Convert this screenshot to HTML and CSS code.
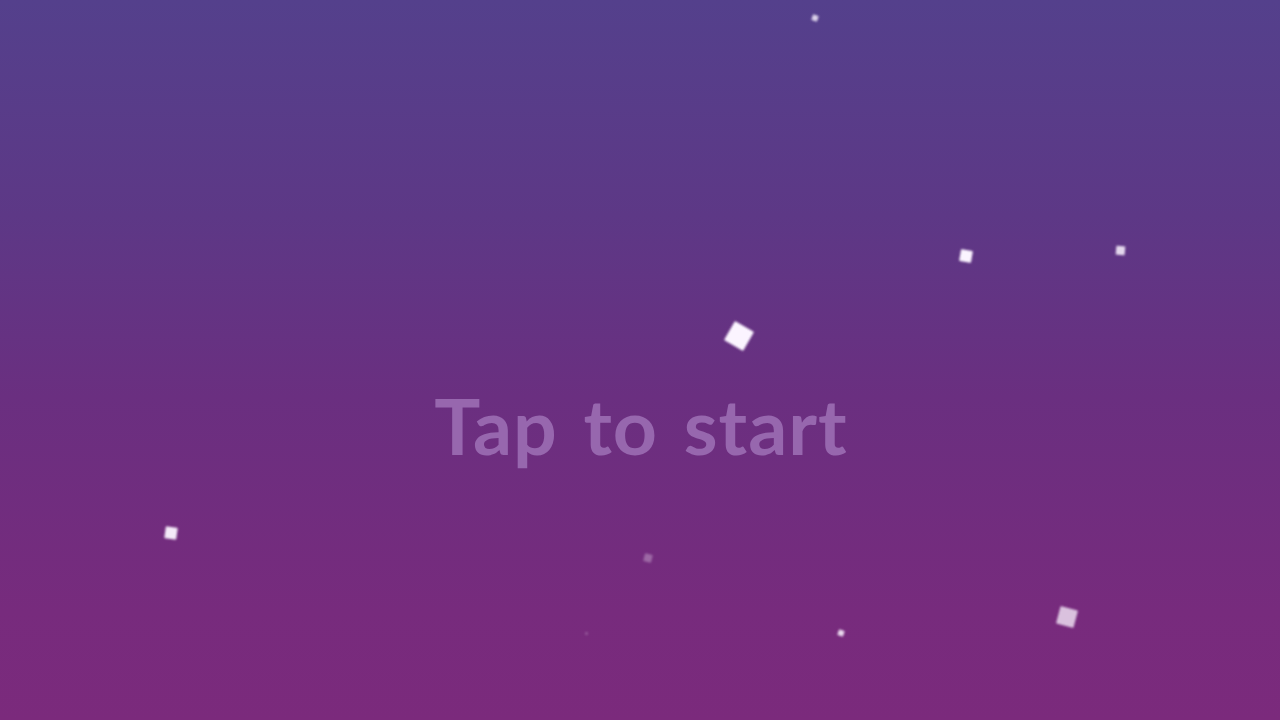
FILE: index.html
```html
<!DOCTYPE html>
<html lang="en">
<head>
<meta charset="utf-8">
<title>Tap to start</title>
<link rel="stylesheet" href="styles.css">
</head>
<body>
<main class="stage">
  <div class="particles">
    <span class="p p1"></span>
    <span class="p p2"></span>
    <span class="p p3"></span>
    <span class="p p4"></span>
    <span class="p p5"></span>
    <span class="p p6"></span>
    <span class="p p7"></span>
    <span class="p p8"></span>
    <span class="p p9"></span>
  </div>
  <h1 class="prompt">Tap to start</h1>
</main>
</body>
</html>
```
FILE: styles.css
```css
html, body {
  margin: 0;
  padding: 0;
  width: 100%;
  height: 100%;
  overflow: hidden;
}
.stage {
  position: relative;
  width: 1280px;
  height: 720px;
  background: linear-gradient(180deg, #54408c 0%, #5d3886 30%, #6a2f80 55%, #772b7d 85%, #7b2a7c 100%);
  display: flex;
  align-items: center;
  justify-content: center;
}
.prompt {
  margin: 0;
  padding-top: 130px;
  padding-left: 2px;
  font-family: "Lato", "Open Sans", sans-serif;
  font-weight: 700;
  font-size: 77px;
  color: #9767ae;
  letter-spacing: 1px;
  word-spacing: 6px;
  filter: blur(0.6px);
}
.particles {
  position: absolute;
  inset: 0;
}
.p {
  position: absolute;
  background: #fbf4ff;
  filter: blur(0.8px);
  border-radius: 1px;
}
.p1 { left: 812px; top: 15px; width: 6px; height: 6px; transform: rotate(20deg); opacity: 0.8; }
.p2 { left: 960px; top: 250px; width: 12px; height: 12px; transform: rotate(10deg); }
.p3 { left: 1116px; top: 246px; width: 9px; height: 9px; transform: rotate(5deg); opacity: 0.85; }
.p4 { left: 728px; top: 325px; width: 22px; height: 22px; transform: rotate(30deg); }
.p5 { left: 165px; top: 527px; width: 12px; height: 12px; transform: rotate(8deg); opacity: 0.95; }
.p6 { left: 644px; top: 554px; width: 8px; height: 8px; transform: rotate(15deg); opacity: 0.3; }
.p7 { left: 585px; top: 632px; width: 3px; height: 3px; opacity: 0.2; }
.p8 { left: 838px; top: 630px; width: 6px; height: 6px; transform: rotate(20deg); opacity: 0.85; }
.p9 { left: 1058px; top: 608px; width: 18px; height: 18px; transform: rotate(15deg); opacity: 0.75; }
```
